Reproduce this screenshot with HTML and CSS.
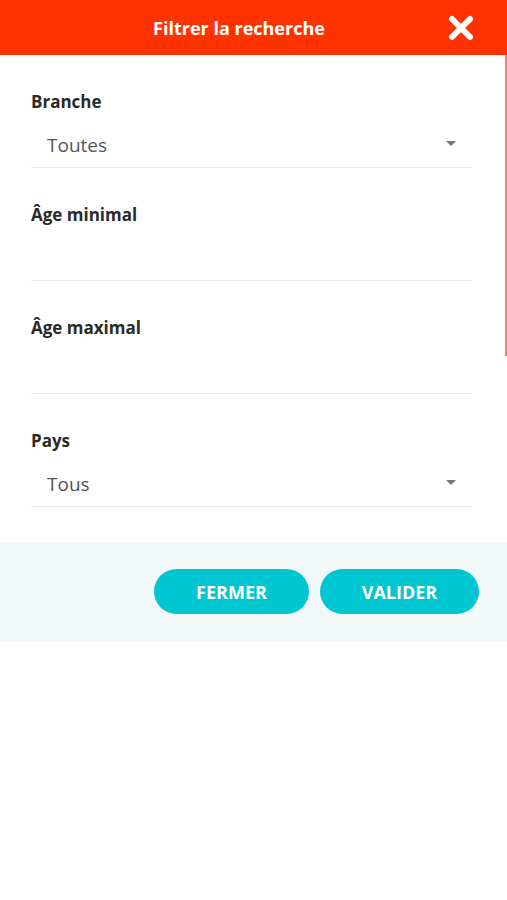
FILE: index.html
```html
<!DOCTYPE html>
<html lang="fr">
<head>
    <meta charset="UTF-8">
    <meta name="viewport" content="width=device-width, initial-scale=1.0">
    <title>Filtrer la recherche</title>
    <link rel="stylesheet" href="styles.css">
</head>
<body>
    <header class="topbar">
        <h1 class="topbar-title">Filtrer la recherche</h1>
        <button class="close-btn" type="button" aria-label="Fermer">
            <svg width="26" height="26" viewBox="0 0 26 26">
                <path d="M4 4 L22 22 M22 4 L4 22" stroke="#fff" stroke-width="6" stroke-linecap="round"/>
            </svg>
        </button>
    </header>

    <div class="content">
        <span class="scroll-bar"></span>
        <form id="filterForm" class="filters">
            <div class="field">
                <label class="field-label" for="branche">Branche</label>
                <div class="field-control select">
                    <span class="select-value">Toutes</span>
                    <span class="caret"></span>
                </div>
            </div>
            <div class="field">
                <label class="field-label" for="age_min">Âge minimal</label>
                <div class="field-control"></div>
            </div>
            <div class="field">
                <label class="field-label" for="age_max">Âge maximal</label>
                <div class="field-control"></div>
            </div>
            <div class="field">
                <label class="field-label" for="pays">Pays</label>
                <div class="field-control select">
                    <span class="select-value">Tous</span>
                    <span class="caret"></span>
                </div>
            </div>
        </form>

        <div class="actions">
            <button class="pill-btn" type="button">FERMER</button>
            <button class="pill-btn" type="submit" form="filterForm">VALIDER</button>
        </div>
    </div>
</body>
</html>
```

FILE: styles.css
```css
body {
    font-family: 'Open Sans', 'Liberation Sans', sans-serif;
    background-color: #fff;
    margin: 0;
    color: #333;
}

.topbar {
    height: 55px;
    background-color: #ff3300;
    display: flex;
    align-items: center;
    justify-content: center;
    position: relative;
}

.topbar-title {
    margin: 0 29px 0 0;
    color: #fff;
    font-size: 18px;
    font-weight: 700;
}

.close-btn {
    position: absolute;
    right: 33px;
    top: 15px;
    background: none;
    border: none;
    padding: 0;
    width: 26px;
    height: 26px;
    cursor: pointer;
}

.content {
    position: relative;
}

.scroll-bar {
    position: absolute;
    right: 0;
    top: 0;
    width: 2px;
    height: 301px;
    background-color: #f08468;
}

.filters {
    display: flex;
    flex-direction: column;
    gap: 35px;
    padding: 35px 35px 0 31px;
}

.field {
    display: flex;
    flex-direction: column;
}

.field-label {
    font-size: 17px;
    font-weight: 700;
    line-height: 24px;
    color: #2a2a2a;
}

.field-control {
    height: 54px;
    border-bottom: 1px solid #e9e9e9;
    box-sizing: border-box;
}

.select {
    display: flex;
    align-items: center;
    justify-content: space-between;
    padding: 18px 16px 9px 16px;
}

.select-value {
    font-size: 19px;
    line-height: 26px;
    color: #555;
}

.caret {
    width: 0;
    height: 0;
    border-left: 5px solid transparent;
    border-right: 5px solid transparent;
    border-top: 5px solid #777;
    margin-bottom: 3px;
}

.actions {
    margin-top: 35px;
    background-color: #f2f8fa;
    display: flex;
    justify-content: flex-end;
    gap: 11px;
    padding: 27px 28px 28px;
}

.pill-btn {
    background-color: #00c6d2;
    color: #fff;
    border: none;
    height: 45px;
    border-radius: 23px;
    font-family: inherit;
    font-size: 18px;
    font-weight: 700;
    cursor: pointer;
    width: 155px;
}

.pill-btn + .pill-btn {
    width: 159px;
}
```
